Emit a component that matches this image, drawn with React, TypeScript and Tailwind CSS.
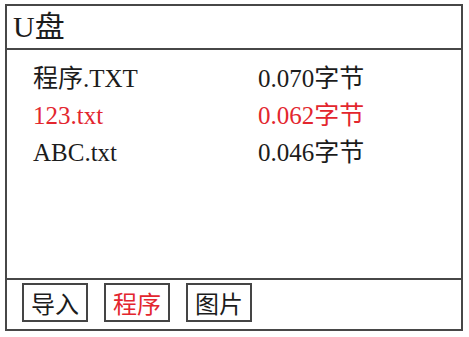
const files = [
  { name: "程序.TXT", size: "0.070字节", active: false },
  { name: "123.txt", size: "0.062字节", active: true },
  { name: "ABC.txt", size: "0.046字节", active: false },
];

const tabs = [
  { label: "导入", active: false },
  { label: "程序", active: true },
  { label: "图片", active: false },
];

export default function App() {
  return (
    <div className="h-[337px] w-[469px] bg-white pl-[5px] pt-[4px] font-['Liberation_Serif','Noto_Sans_CJK_SC',serif] text-[#1c1c1c]">
      <div className="flex h-[327px] w-[458px] flex-col border-2 border-[#474747]">
        <header className="h-[44px] border-b-2 border-[#474747] pl-[6px] text-[30px] leading-[42px]">
          U盘
        </header>

        <main className="flex-1 pl-[26px] pt-[10px] text-[25px] leading-[37px]">
          {files.map((file) => (
            <div
              className={`flex ${file.active ? "text-[#e3262e]" : ""}`}
              key={file.name}
            >
              <span className="w-[225px]">{file.name}</span>
              <span>{file.size}</span>
            </div>
          ))}
        </main>

        <footer className="flex h-[51px] gap-[16px] border-t-2 border-[#474747] pl-[15px] pt-[3px]">
          {tabs.map((tab) => (
            <button
              className={`flex h-[39px] w-[66px] items-center justify-center border-2 border-[#454545] font-['Noto_Sans_CJK_SC',sans-serif] text-[24px] leading-none ${tab.active ? "text-[#e3262e]" : ""}`}
              key={tab.label}
              type="button"
            >
              {tab.label}
            </button>
          ))}
        </footer>
      </div>
    </div>
  );
}
